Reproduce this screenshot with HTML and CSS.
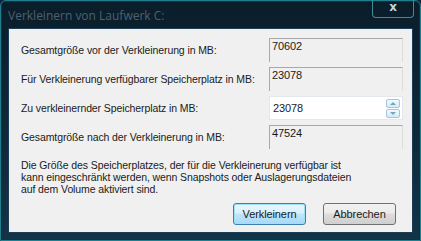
FILE: index.html
```html
<!DOCTYPE html>
<html lang="de">
<head>
    <meta charset="UTF-8">
    <title>Verkleinern von Laufwerk C:</title>
    <link rel="stylesheet" href="styles.css">
</head>
<body>

    <div class="window">
        <div class="titlebar">
            <span class="title">Verkleinern von Laufwerk C:</span>
            <div class="close-btn">x</div>
        </div>

        <div class="client">
            <div class="fields">
                <div class="field">
                    <span class="label">Gesamtgröße vor der Verkleinerung in MB:</span>
                    <div class="readonly">70602</div>
                </div>
                <div class="field">
                    <span class="label">Für Verkleinerung verfügbarer Speicherplatz in MB:</span>
                    <div class="readonly">23078</div>
                </div>
                <div class="field">
                    <span class="label">Zu verkleinernder Speicherplatz in MB:</span>
                    <div class="spinbox">
                        <span class="spin-value">23078</span>
                        <div class="spin-buttons">
                            <div class="spin-btn"><span class="arrow up"></span></div>
                            <div class="spin-btn"><span class="arrow down"></span></div>
                        </div>
                    </div>
                </div>
                <div class="field">
                    <span class="label">Gesamtgröße nach der Verkleinerung in MB:</span>
                    <div class="readonly">47524</div>
                </div>
            </div>

            <p class="note">
                Die Größe des Speicherplatzes, der für die Verkleinerung verfügbar ist<br>
                kann eingeschränkt werden, wenn Snapshots oder Auslagerungsdateien<br>
                auf dem Volume aktiviert sind.
            </p>

            <div class="actions">
                <button class="btn default">Verkleinern</button>
                <button class="btn">Abbrechen</button>
            </div>
        </div>
    </div>

</body>
</html>
```

FILE: styles.css
```css
:root {
    --frame: #0e2637;
    --frame-edge: #1f7f8e;
    --client: #f0f0f0;
    --text: #1a1a1a;
    --box-border: #a8a8a8;
}

* {
    margin: 0;
    padding: 0;
    box-sizing: border-box;
}

body {
    background: var(--frame);
    font-family: "Liberation Sans", Arial, sans-serif;
    font-size: 10.5px;
    letter-spacing: -0.1px;
    color: var(--text);
}

.window {
    width: 421px;
    height: 241px;
    display: flex;
    flex-direction: column;
    background: linear-gradient(180deg, #0a1d2a 0%, #0f2a3b 60%, #123446 100%);
    border: 1px solid var(--frame-edge);
    border-radius: 6px 6px 0 0;
    box-shadow: inset 0 0 0 1px #0a3444;
}

.titlebar {
    height: 27px;
    display: flex;
    align-items: center;
    justify-content: space-between;
    padding-left: 7px;
    padding-right: 6px;
}

.title {
    color: #4f6170;
    font-family: "Open Sans", "Liberation Sans", sans-serif;
    font-size: 12px;
    letter-spacing: 0;
    margin-top: 2px;
}

.close-btn {
    align-self: flex-start;
    width: 42px;
    height: 18px;
    margin-top: -1px;
    border: 1px solid #3f8c98;
    border-top: none;
    border-radius: 0 0 4px 4px;
    color: #c4d4d8;
    font-family: "DejaVu Sans", sans-serif;
    font-weight: bold;
    font-size: 12px;
    letter-spacing: 0;
    text-align: center;
    line-height: 15px;
}

.client {
    flex: 1;
    margin: 0 7px 7px 7px;
    background: var(--client);
    border: 1px solid #1c3d55;
    padding: 9px 9px 7px 12px;
    display: flex;
    flex-direction: column;
}

.fields {
    display: flex;
    flex-direction: column;
    gap: 5px;
}

.field {
    display: flex;
    align-items: center;
    height: 24px;
}

.label {
    width: 248px;
    white-space: nowrap;
}

.readonly {
    flex: 1;
    height: 100%;
    border-top: 1px solid var(--box-border);
    border-left: 1px solid var(--box-border);
    border-right: 1px solid #dcdcdc;
    padding: 1px 0 0 2px;
    font-size: 11px;
}

.spinbox {
    flex: 1;
    height: 100%;
    background: #fff;
    border: 1px solid #e3e9ef;
    display: flex;
    align-items: center;
    justify-content: space-between;
    padding-left: 3px;
    padding-right: 2px;
    font-size: 11px;
}

.spin-buttons {
    display: flex;
    flex-direction: column;
    gap: 1px;
}

.spin-btn {
    width: 14px;
    height: 9px;
    border: 1px solid #a5c6d8;
    border-radius: 2px;
    background: linear-gradient(180deg, #f2f9fd, #d4ebf7);
    display: flex;
    align-items: center;
    justify-content: center;
}

.arrow {
    width: 0;
    height: 0;
    border-left: 3px solid transparent;
    border-right: 3px solid transparent;
}

.arrow.up {
    border-bottom: 3px solid #6fa7c4;
}

.arrow.down {
    border-top: 3px solid #6fa7c4;
}

.note {
    margin-top: 10px;
    line-height: 12px;
}

.actions {
    margin-top: auto;
    display: flex;
    justify-content: flex-end;
    gap: 17px;
    padding-right: 7px;
}

.btn {
    width: 73px;
    height: 22px;
    font-family: "Liberation Sans", Arial, sans-serif;
    font-size: 11px;
    letter-spacing: -0.1px;
    color: var(--text);
    border: 1px solid #707070;
    border-radius: 3px;
    background: linear-gradient(180deg, #f2f2f2 0%, #ebebeb 45%, #dddddd 50%, #cfcfcf 100%);
}

.btn.default {
    border-color: #3c7fb1;
    background: linear-gradient(180deg, #eaf6fd 0%, #d9f0fc 45%, #bee6fd 50%, #a7d9f5 100%);
    box-shadow: inset 0 0 0 1px #9fe1f3;
}
```
